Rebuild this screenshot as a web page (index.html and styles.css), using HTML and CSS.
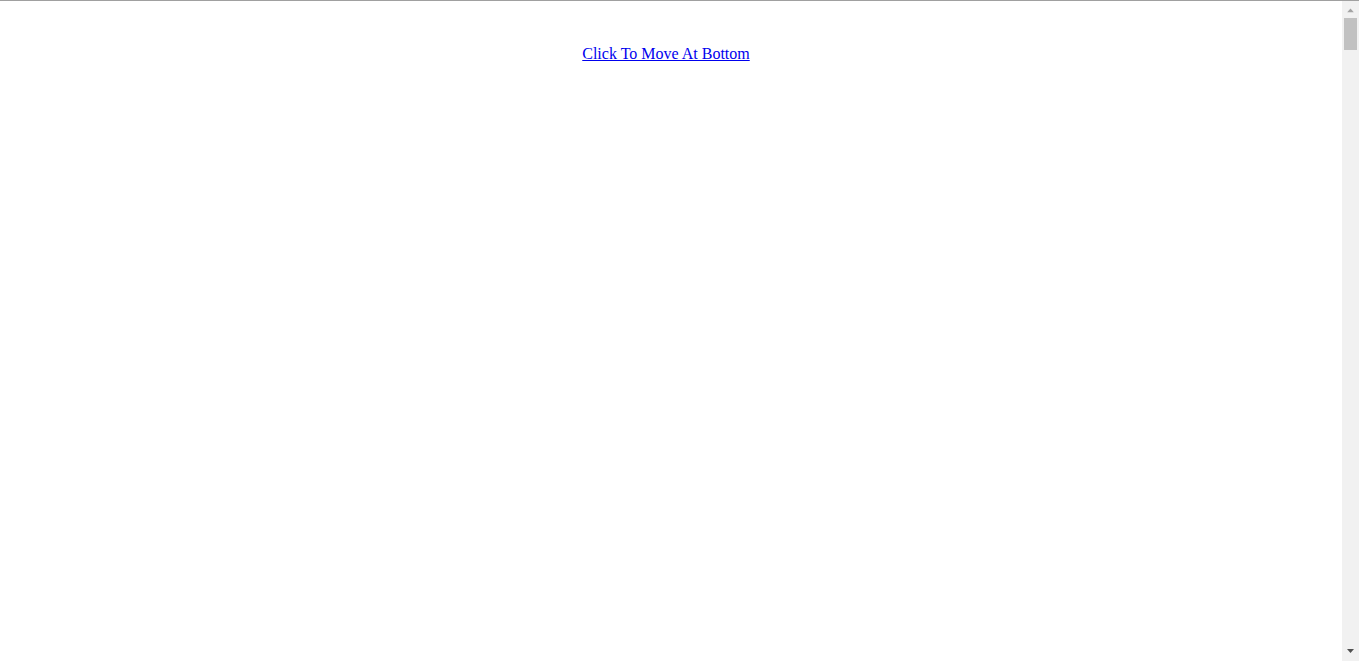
FILE: index.html
```html
<!DOCTYPE html>
<html>
<head>
<meta charset="utf-8">
<title>Scroll</title>
<link rel="stylesheet" href="styles.css">
</head>
<body>
<div class="top-line"></div>
<div class="page">
  <p class="jump"><a href="#bottom" class="jump-link">Click To Move At Bottom</a></p>
  <div class="spacer"></div>
  <div id="bottom" class="bottom"></div>
</div>
<div class="scrollbar" aria-hidden="true">
  <svg class="arrow arrow-up" width="17" height="17" viewBox="0 0 17 17"><polygon points="5,12 12,12 8.5,8" fill="#a3a3a3"/></svg>
  <div class="track"><div class="thumb"></div></div>
  <svg class="arrow arrow-down" width="17" height="17" viewBox="0 0 17 17"><polygon points="5,5 12,5 8.5,9" fill="#505050"/></svg>
</div>
</body>
</html>
```
FILE: styles.css
```css
html, body {
  margin: 0;
  padding: 0;
  background: #ffffff;
}
body {
  font-family: "Liberation Serif", "Times New Roman", serif;
  font-size: 16px;
}
.top-line {
  position: fixed;
  top: 0;
  left: 0;
  right: 0;
  height: 1px;
  background: #a0a0a0;
  z-index: 2;
}
.page {
  margin-right: 17px;
  padding: 1px 8px 0;
}
.jump {
  margin: 0;
  padding: 44px 10px 0 0;
  text-align: center;
  line-height: normal;
}
.jump-link {
  color: #0000ee;
  text-decoration: underline;
}
.spacer {
  height: 12900px;
}
.bottom {
  height: 8px;
}
.scrollbar {
  position: fixed;
  top: 1px;
  right: 0;
  bottom: 0;
  width: 17px;
  background: #f1f1f1;
  display: flex;
  flex-direction: column;
}
.arrow {
  display: block;
  flex: none;
}
.arrow-up {
  height: 16px;
}
.track {
  flex: 1;
  padding: 1px 2px 0;
}
.thumb {
  height: 32px;
  background: #c1c1c1;
}
```
